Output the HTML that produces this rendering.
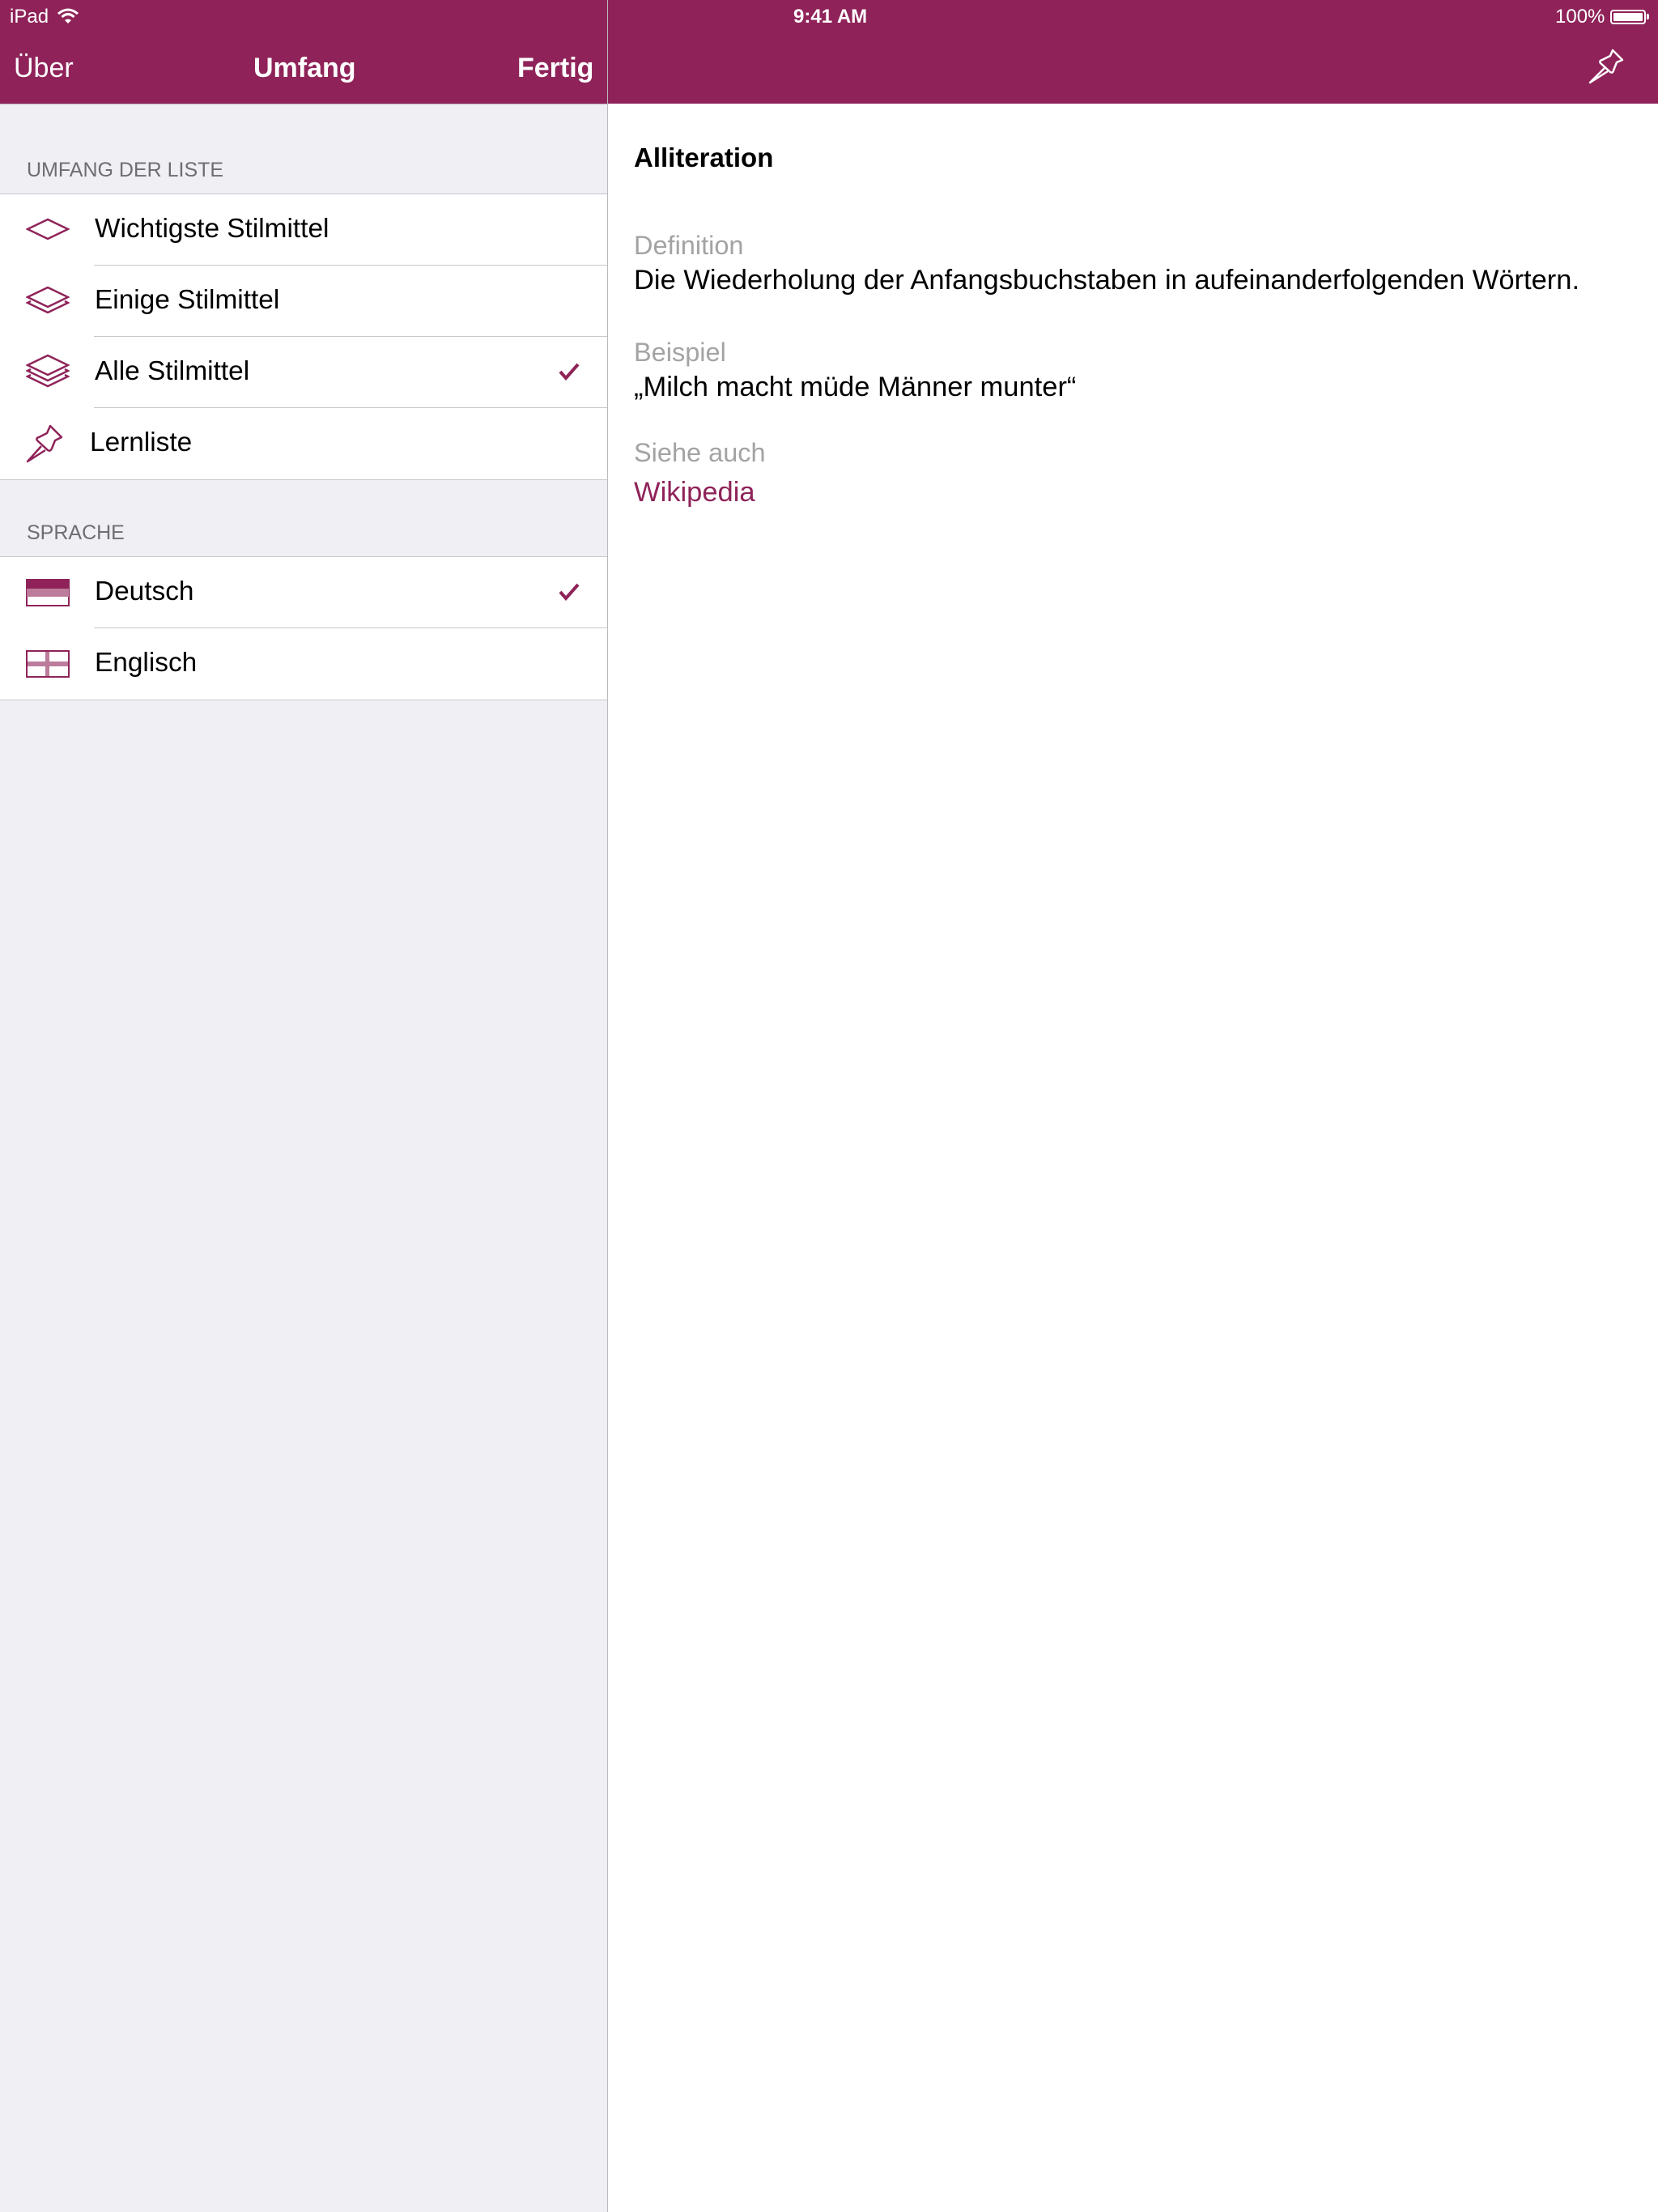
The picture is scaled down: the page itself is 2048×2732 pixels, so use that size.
<!DOCTYPE html>
<html><head><meta charset="utf-8"><style>
*{margin:0;padding:0;box-sizing:border-box}
body{width:2048px;height:2732px;position:relative;background:#fff;font-family:"Liberation Sans",sans-serif;overflow:hidden}
.abs{position:absolute}
.nav{left:0;top:0;width:2048px;height:128px;background:#8f2359}
.st{color:#fff;font-size:24px;top:7px}
.nt{color:#fff;font-size:34px;top:65px}
.left{left:0;top:128px;width:750px;height:2604px;background:#efeff4;border-top:1px solid #b9b9be}
.div{left:750px;top:0;width:1px;height:2732px;background:#b9b9be}
.hdr{color:#6d6d72;font-size:25px;left:33px}
.sec{left:0;width:750px;background:#fff;border-top:1px solid #c8c7cc;border-bottom:1px solid #c8c7cc}
.row{position:relative;height:88px}
.row .t{position:absolute;left:117px;top:24px;font-size:33.4px;color:#000}
.row .sep{position:absolute;left:116px;right:0;bottom:0;height:1px;background:#c8c7cc}
.row svg{position:absolute}
.chk{position:absolute;left:690px;top:32px}
.r{left:783px;font-size:34.5px;color:#000}
.g{color:#a3a3a3;font-size:32.5px}
</style></head><body>
<div class="abs nav"></div>
<div class="abs st" style="left:12px">iPad</div>
<svg class="abs" style="left:70px;top:10px" width="28" height="20" viewBox="0 0 28 20"><path d="M2 7 Q14 -3 26 7" stroke="#fff" stroke-width="3" fill="none"/><path d="M6.5 11 Q14 4 21.5 11" stroke="#fff" stroke-width="3" fill="none"/><path d="M10 15 L14 19 L18 15 Q14 12 10 15Z" fill="#fff"/></svg>
<div class="abs st" style="left:980px;font-weight:bold;font-size:24px">9:41 AM</div>
<div class="abs st" style="left:1921px">100%</div>
<div class="abs" style="left:1989px;top:12px;width:44px;height:18px;border:2px solid #fff;border-radius:4px;padding:2px"><div style="background:#fff;width:100%;height:100%;border-radius:1px"></div></div>
<div class="abs" style="left:2034px;top:17px;width:3px;height:7px;background:#fff;border-radius:0 2px 2px 0"></div>
<div class="abs nt" style="left:17px">Über</div>
<div class="abs nt" style="left:313px;font-weight:bold">Umfang</div>
<div class="abs nt" style="left:639px;font-weight:bold">Fertig</div>
<svg class="abs" style="left:1962px;top:60px" width="44" height="44" viewBox="0 0 44 44" fill="none" stroke="#fff" stroke-width="2.5" stroke-linejoin="round"><path d="M30 2 L42 14 L35 17 L31 27 Q30 31 27 29 L15 18 Q13 15 17 14 L27 9 Z"/><path d="M20 24 L2 42 L24 28"/></svg>
<div class="abs left"></div>
<div class="abs div"></div>
<div class="abs hdr" style="top:196px">UMFANG DER LISTE</div>
<div class="abs sec" style="top:239px">
 <div class="row"><svg style="left:32px;top:28px" width="54" height="30" viewBox="0 0 54 30"><path d="M2 15 L27 3 L52 15 L27 27 Z" fill="none" stroke="#8f2359" stroke-width="2.5"/></svg><div class="t">Wichtigste Stilmittel</div><div class="sep"></div></div>
 <div class="row"><svg style="left:32px;top:24px" width="54" height="40" viewBox="0 0 54 40"><path d="M2 15 L27 3 L52 15 L27 27 Z" fill="none" stroke="#8f2359" stroke-width="2.5"/><path d="M6 20 L2 22 L27 34 L52 22 L48 20" fill="none" stroke="#8f2359" stroke-width="2.5"/></svg><div class="t">Einige Stilmittel</div><div class="sep"></div></div>
 <div class="row"><svg style="left:32px;top:20px" width="54" height="48" viewBox="0 0 54 48"><path d="M2 15 L27 3 L52 15 L27 27 Z" fill="none" stroke="#8f2359" stroke-width="2.5"/><path d="M6 20 L2 22 L27 34 L52 22 L48 20" fill="none" stroke="#8f2359" stroke-width="2.5"/><path d="M6 27 L2 29 L27 41 L52 29 L48 27" fill="none" stroke="#8f2359" stroke-width="2.5"/></svg><div class="t">Alle Stilmittel</div><svg class="chk" width="26" height="22" viewBox="0 0 26 22"><path d="M2 11 L9 19 L24 2" fill="none" stroke="#8f2359" stroke-width="4"/></svg><div class="sep"></div></div>
 <div class="row"><svg style="left:32px;top:20px" width="46" height="48" viewBox="0 0 46 48" fill="none" stroke="#8f2359" stroke-width="2.5" stroke-linejoin="round"><path d="M30 2 L44 16 L36 20 L32 30 Q30 34 27 32 L14 20 Q12 17 16 16 L26 11 Z"/><path d="M19 27 L2 46 L24 32"/></svg><div class="t" style="left:111px">Lernliste</div></div>
</div>
<div class="abs hdr" style="top:644px">SPRACHE</div>
<div class="abs sec" style="top:687px">
 <div class="row"><svg style="left:32px;top:27px" width="54" height="34" viewBox="0 0 54 34"><rect x="1" y="1" width="52" height="32" fill="#fff" stroke="#8f2359" stroke-width="2"/><rect x="1" y="1" width="52" height="11" fill="#8f2359"/><rect x="1" y="12" width="52" height="10" fill="#bd7c9c"/></svg><div class="t">Deutsch</div><svg class="chk" width="26" height="22" viewBox="0 0 26 22"><path d="M2 11 L9 19 L24 2" fill="none" stroke="#8f2359" stroke-width="4"/></svg><div class="sep"></div></div>
 <div class="row"><svg style="left:32px;top:27px" width="54" height="34" viewBox="0 0 54 34"><rect x="1" y="1" width="52" height="32" fill="#fff" stroke="#8f2359" stroke-width="2"/><rect x="1" y="14" width="52" height="6" fill="#bd7c9c"/><rect x="24" y="1" width="5" height="32" fill="#bd7c9c"/><rect x="1" y="1" width="52" height="32" fill="none" stroke="#8f2359" stroke-width="2"/></svg><div class="t">Englisch</div></div>
</div>
<div class="abs r" style="top:176px;font-weight:bold;font-size:33px">Alliteration</div>
<div class="abs r g" style="top:285px">Definition</div>
<div class="abs r" style="top:327px">Die Wiederholung der Anfangsbuchstaben in aufeinanderfolgenden Wörtern.</div>
<div class="abs r g" style="top:417px">Beispiel</div>
<div class="abs r" style="top:459px">„Milch macht müde Männer munter“</div>
<div class="abs r g" style="top:541px">Siehe auch</div>
<div class="abs r" style="top:589px;color:#8f2359">Wikipedia</div>
</body></html>
